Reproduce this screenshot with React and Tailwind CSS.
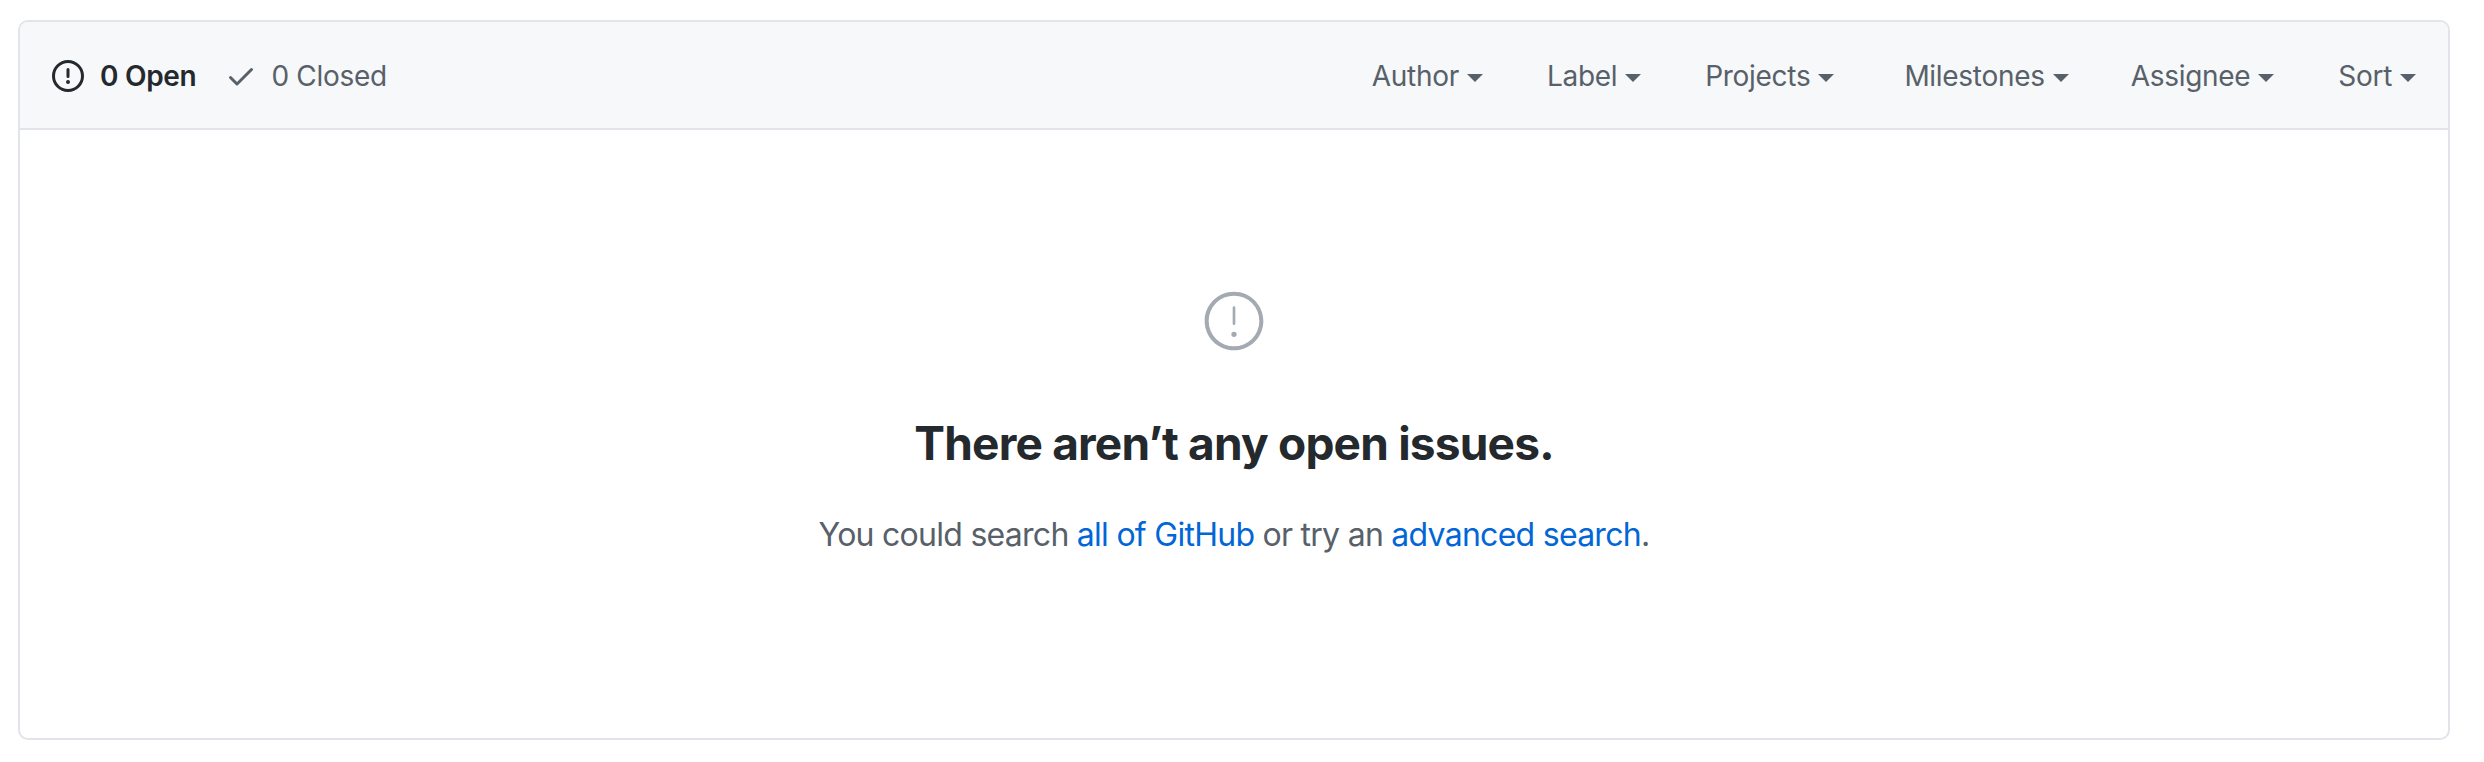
const FONT = "font-['Inter','Liberation_Sans',sans-serif]";

const filters = [
  { name: "Author", className: "mr-[64px]" },
  { name: "Label", className: "mr-[64px]" },
  { name: "Projects", className: "mr-[70px]" },
  { name: "Milestones", className: "mr-[62px]" },
  { name: "Assignee", className: "mr-[64px]" },
  { name: "Sort", className: "" },
];

function IssueIcon({ className }) {
  return (
    <svg viewBox="0 0 16 16" fill="currentColor" className={className}>
      <path
        fillRule="evenodd"
        d="M8 1.5a6.5 6.5 0 100 13 6.5 6.5 0 000-13zM0 8a8 8 0 1116 0A8 8 0 010 8zm9 3a1 1 0 11-2 0 1 1 0 012 0zm-.25-6.25a.75.75 0 00-1.5 0v3.5a.75.75 0 001.5 0v-3.5z"
      />
    </svg>
  );
}

function CheckIcon({ className }) {
  return (
    <svg viewBox="0 0 16 16" fill="currentColor" className={className}>
      <path
        fillRule="evenodd"
        d="M13.78 4.22a.75.75 0 010 1.06l-7.25 7.25a.75.75 0 01-1.06 0L2.22 9.28a.75.75 0 011.06-1.06L6 10.94l6.72-6.72a.75.75 0 011.06 0z"
      />
    </svg>
  );
}

function BlankIcon({ className }) {
  return (
    <svg viewBox="0 0 24 24" fill="currentColor" className={className}>
      <path
        fillRule="evenodd"
        d="M12 2.5a9.5 9.5 0 100 19 9.5 9.5 0 000-19zM1 12C1 5.925 5.925 1 12 1s11 4.925 11 11-4.925 11-11 11S1 18.075 1 12zm12 5a1 1 0 11-2 0 1 1 0 012 0zm-.5-10a.5.5 0 00-1 0v6a.5.5 0 001 0V7z"
      />
    </svg>
  );
}

export default function App() {
  return (
    <div className={`${FONT} min-h-screen bg-white pl-[18px] pr-[34px] pt-[20px] pb-[22px]`}>
      <div className="h-[720px] rounded-[10px] border-2 border-[#e1e4e8] overflow-hidden">
        <div className="h-[108px] bg-[#f6f8fa] border-b-2 border-[#e1e4e8] flex items-center justify-between pl-[32px] pr-[32px] pt-[2px] text-[28px] tracking-[-0.3px] text-[#586069]">
          <div className="flex items-center">
            <span className="flex items-center font-semibold text-[#24292e]">
              <IssueIcon className="w-[32px] h-[32px] mr-[16px]" />
              0 Open
            </span>
            <span className="flex items-center ml-[29px]">
              <CheckIcon className="w-[32px] h-[32px] mr-[14px]" />
              0 Closed
            </span>
          </div>
          <div className="flex items-center">
            {filters.map((f) => (
              <span key={f.name} className={`flex items-center ${f.className}`}>
                {f.name}
                <span className="ml-[8px] mt-[3px] w-0 h-0 border-x-[8px] border-x-transparent border-t-[8px] border-t-[#586069]" />
              </span>
            ))}
          </div>
        </div>
        <div className="flex flex-col items-center pt-[159px]">
          <BlankIcon className="w-[64px] h-[64px] text-[#a3aab1]" />
          <h3 className="mt-[60px] text-[46px] leading-[60px] tracking-[-0.8px] font-[650] text-[#24292e]">
            There aren’t any open issues.
          </h3>
          <p className="mt-[38px] text-[32px] leading-[48px] tracking-[-0.73px] text-[#586069]">
            You could search <a className="text-[#0366d6]">all of GitHub</a> or try an{" "}
            <a className="text-[#0366d6]">advanced search</a>.
          </p>
        </div>
      </div>
    </div>
  );
}
